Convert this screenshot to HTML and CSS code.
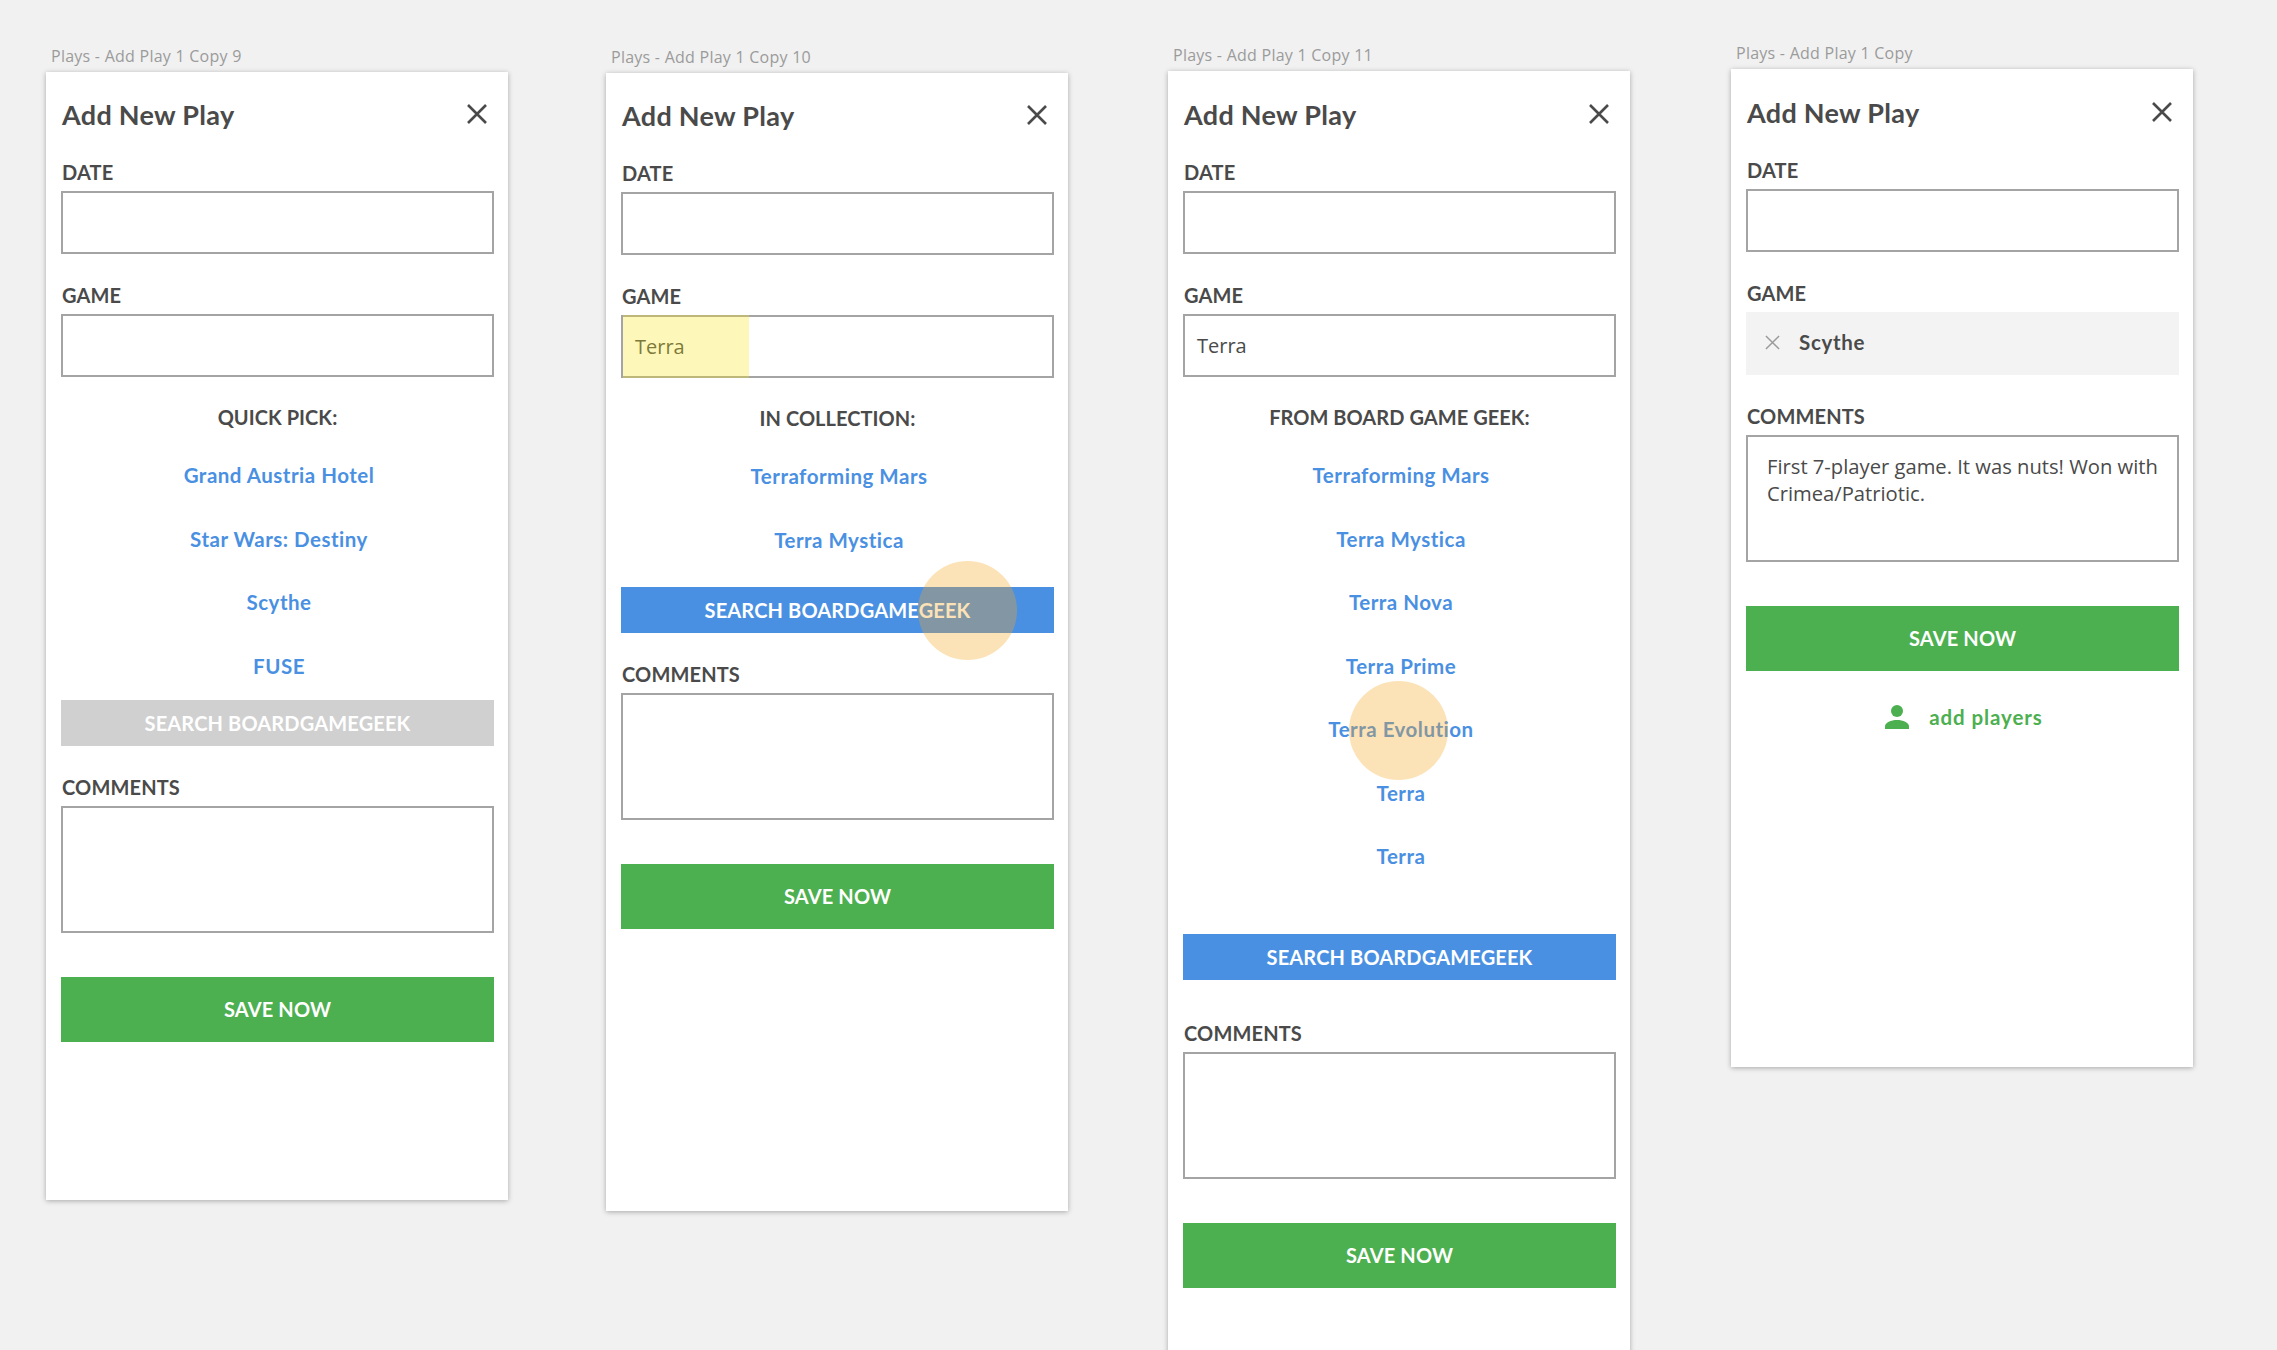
FILE: index.html
```html
<!DOCTYPE html>
<html lang="en">
<head>
<meta charset="utf-8">
<title>Add New Play</title>
<link rel="stylesheet" href="styles.css">
</head>
<body>
<section class="board board-1">
  <div class="board-name">Plays - Add Play 1 Copy 9</div>
  <div class="card card-1">
    <header class="head"><h1>Add New Play</h1><svg class="close" viewBox="0 0 20 20"><path d="M1 1L19 19M19 1L1 19"/></svg></header>
    <div class="label">DATE</div><div class="input"></div>
    <div class="label gap">GAME</div><div class="input"></div>
    <div class="heading">QUICK PICK:</div>
    <ul class="links">
      <li>Grand Austria Hotel</li><li>Star Wars: Destiny</li><li>Scythe</li><li>FUSE</li>
    </ul>
    <div class="btn btn-grey after-short">SEARCH BOARDGAMEGEEK</div>
    <div class="label gap">COMMENTS</div><div class="input area"></div>
    <div class="btn btn-green save">SAVE NOW</div>
  </div>
</section>

<section class="board board-2">
  <div class="board-name">Plays - Add Play 1 Copy 10</div>
  <div class="card card-2">
    <header class="head"><h1>Add New Play</h1><svg class="close" viewBox="0 0 20 20"><path d="M1 1L19 19M19 1L1 19"/></svg></header>
    <div class="label">DATE</div><div class="input"></div>
    <div class="label gap">GAME</div><div class="input typed">Terra<span class="selection"></span></div>
    <div class="heading">IN COLLECTION:</div>
    <ul class="links">
      <li>Terraforming Mars</li><li>Terra Mystica</li>
    </ul>
    <div class="btn btn-blue after-mid">SEARCH BOARDGAMEGEEK</div>
    <div class="label gap">COMMENTS</div><div class="input area"></div>
    <div class="btn btn-green save">SAVE NOW</div>
    <div class="touch touch-2"></div>
  </div>
</section>

<section class="board board-3">
  <div class="board-name">Plays - Add Play 1 Copy 11</div>
  <div class="card card-3">
    <header class="head head-tall"><h1>Add New Play</h1><svg class="close" viewBox="0 0 20 20"><path d="M1 1L19 19M19 1L1 19"/></svg></header>
    <div class="label">DATE</div><div class="input"></div>
    <div class="label gap">GAME</div><div class="input typed">Terra</div>
    <div class="heading">FROM BOARD GAME GEEK:</div>
    <ul class="links">
      <li>Terraforming Mars</li><li>Terra Mystica</li><li>Terra Nova</li><li>Terra Prime</li><li>Terra Evolution</li><li>Terra</li><li>Terra</li>
    </ul>
    <div class="btn btn-blue after-long">SEARCH BOARDGAMEGEEK</div>
    <div class="label gap-wide">COMMENTS</div><div class="input area"></div>
    <div class="btn btn-green save">SAVE NOW</div>
    <div class="touch touch-3"></div>
  </div>
</section>

<section class="board board-4">
  <div class="board-name">Plays - Add Play 1 Copy</div>
  <div class="card card-4">
    <header class="head head-tall"><h1>Add New Play</h1><svg class="close" viewBox="0 0 20 20"><path d="M1 1L19 19M19 1L1 19"/></svg></header>
    <div class="label">DATE</div><div class="input"></div>
    <div class="label gap">GAME</div>
    <div class="chip"><svg class="chip-x" viewBox="0 0 16 16"><path d="M1 1L15 15M15 1L1 15"/></svg><span>Scythe</span></div>
    <div class="label gap">COMMENTS</div>
    <div class="input area filled">First 7-player game. It was nuts! Won with Crimea/Patriotic.</div>
    <div class="btn btn-green save">SAVE NOW</div>
    <div class="add-players">
      <svg class="person" viewBox="0 0 24 24"><circle cx="12" cy="6" r="6"/><path d="M0 24V21.5C0 17.5 6 15 12 15S24 17.5 24 21.5V24Z"/></svg>
      <span>add players</span>
    </div>
  </div>
</section>
</body>
</html>
```
FILE: styles.css
```css
* { box-sizing: border-box; }
html, body { margin: 0; height: 100%; }
body {
  position: relative;
  height: 1350px;
  overflow: hidden;
  background: #f1f1f1;
  font-family: "Lato", "Liberation Sans", sans-serif;
  color: #4a4a4a;
}

.board { position: absolute; width: 462px; }
.board-1 { left: 46px; top: 46px; }
.board-2 { left: 606px; top: 47px; }
.board-3 { left: 1168px; top: 45px; }
.board-4 { left: 1731px; top: 43px; }

.board-name {
  height: 22px;
  margin-bottom: 4px;
  padding-left: 5px;
  font: 400 16px/20px "Open Sans", sans-serif;
  letter-spacing: .25px;
  color: #9b9b9b;
}

.card {
  position: relative;
  padding: 0 14px 0 15px;
  background: #fff;
  box-shadow: 0 1px 5px rgba(0, 0, 0, .3);
}
.card-1 { height: 1128px; }
.card-2 { height: 1138px; }
.card-3 { height: 1320px; }
.card-4 { height: 998px; }

.head {
  display: flex;
  align-items: center;
  justify-content: space-between;
  height: 89px;
  padding: 0 7px 4px 1px;
}
.head-tall { height: 90px; padding-bottom: 2px; }
h1 {
  margin: 0;
  font-size: 27px;
  font-weight: 700;
  line-height: 34px;
  letter-spacing: .3px;
}
.close { width: 20px; height: 20px; margin-top: -2px; fill: none; stroke: #4a4a4a; stroke-width: 2.6; }

.label {
  height: 22px;
  margin: 0 0 8px 1px;
  font-size: 20px;
  font-weight: 700;
  line-height: 22px;
  letter-spacing: .15px;
}
.gap { margin-top: 30px; }
.gap-wide { margin-top: 42px; }

.input {
  position: relative;
  height: 63px;
  border: 2px solid #a4a4a4;
  background: #fff;
}
.area { height: 127px; }
.typed {
  padding-left: 12px;
  font: 400 20px/59px "Open Sans", sans-serif;
}
.filled {
  padding: 16px 10px 0 19px;
  font: 400 20.2px/27px "Open Sans", sans-serif;
}
.selection {
  position: absolute;
  left: 0;
  top: -2px;
  bottom: -2px;
  width: 126px;
  background: rgba(248, 231, 28, .3);
}

.heading {
  height: 22px;
  margin-top: 29px;
  font-size: 20px;
  font-weight: 700;
  line-height: 22px;
  letter-spacing: .05px;
  text-align: center;
}
.links { margin: 16px 0 0; padding: 0 0 0 3px; list-style: none; }
.links li {
  height: 63.5px;
  font-size: 20.5px;
  font-weight: 700;
  line-height: 63.5px;
  letter-spacing: .5px;
  text-align: center;
  color: #4a90e2;
}

.btn {
  height: 46px;
  font-size: 20px;
  font-weight: 700;
  line-height: 46px;
  letter-spacing: .15px;
  text-align: center;
  color: #fff;
}
.btn-grey { background: #d0d0d0; }
.btn-blue { background: #4a90e2; }
.btn-green { background: #4caf50; }
.after-short { margin-top: 2px; }
.after-mid { margin-top: 15px; }
.after-long { margin-top: 45px; }
.save { height: 65px; margin-top: 44px; line-height: 65px; }

.chip {
  display: flex;
  align-items: center;
  gap: 19px;
  height: 63px;
  margin-bottom: 1px;
  padding: 0 0 3px 19px;
  background: #f3f3f3;
  font-size: 20.5px;
  font-weight: 700;
  letter-spacing: .7px;
}
.chip-x { width: 15px; height: 15px; fill: none; stroke: #9b9b9b; stroke-width: 1.6; }

.add-players {
  display: flex;
  align-items: center;
  justify-content: center;
  gap: 20px;
  margin-top: 34px;
  padding-left: 3px;
  font-size: 20.5px;
  font-weight: 700;
  line-height: 24px;
  letter-spacing: .9px;
  color: #4caf50;
}
.person { width: 24px; height: 24px; fill: #4caf50; }

.touch {
  position: absolute;
  width: 99px;
  height: 99px;
  border-radius: 50%;
  background: rgba(245, 166, 35, .33);
}
.touch-2 { left: 312px; top: 488px; }
.touch-3 { left: 181px; top: 610px; }
```
